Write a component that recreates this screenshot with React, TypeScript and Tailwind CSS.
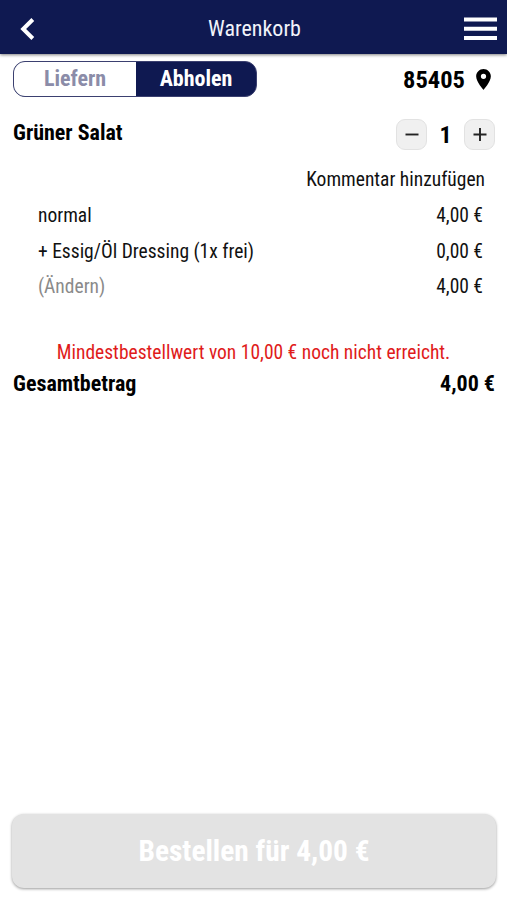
import { useState } from 'react'

const lines = [
  { label: 'normal', price: '4,00 €' },
  { label: '+ Essig/Öl Dressing (1x frei)', price: '0,00 €' },
  { label: '(Ändern)', price: '4,00 €', muted: true },
]

function RoundButton({ plus, onClick }: { plus?: boolean; onClick: () => void }) {
  return (
    <button onClick={onClick} aria-label={plus ? 'Mehr' : 'Weniger'} className="flex h-[31px] w-[31px] items-center justify-center rounded-[9px] border border-[#e2e2e2] bg-[#f0f0f0]">
      <svg width="14" height="14" viewBox="0 0 14 14" stroke="#222" strokeWidth="1.9">
        <path d={plus ? 'M.5 6.500h13M7 0v13' : 'M.5 6.500h13'} />
      </svg>
    </button>
  )
}

export default function App() {
  const [count, setCount] = useState(1)
  return (
    <div className="flex h-[900px] w-[507px] flex-col bg-white font-['Roboto_Condensed','Roboto',sans-serif] text-black font-stretch-75%">
      <header className="flex h-[54px] shrink-0 items-center justify-between bg-[#0f1951] pr-[10px] pl-[20px] shadow-[0_1px_3px_rgba(0,0,0,0.5)]">
        <svg width="25" height="24" viewBox="0 0 25 24" fill="none" stroke="#fff" strokeWidth="4" className="mt-[3px]">
          <path d="M12.800 2.500L3.200 12l9.600 9.500" />
        </svg>
        <h1 className="mt-[3px] text-[22px] leading-[26px] text-[#f1f3fa]">Warenkorb</h1>
        <svg width="33" height="24" viewBox="0 0 33 24" fill="#fff" className="mt-[3px]">
          <path d="M0 .5h33v4H0zM0 9.700h33v4H0zM0 18.900h33v4H0z" />
        </svg>
      </header>

      <div className="mt-[7px] flex h-[36px] items-center justify-between pr-[16px] pl-[13px]">
        <div className="flex h-[36px] w-[244px] overflow-hidden rounded-[12px] border border-[#3b4070] bg-[#0f1951] text-[22px] leading-[34px] font-bold">
          <button className="w-[122px] bg-white text-[#8b8ca8]">Liefern</button>
          <button className="flex-1 text-white">Abholen</button>
        </div>
        <div className="flex items-center gap-[11px] text-[24.500px] leading-[34px] font-bold">
          <span className="mt-[2px]">85405</span>
          <svg width="15" height="21" viewBox="5 2 14 20">
            <path d="M12 2C8.130 2 5 5.130 5 9c0 5.250 7 13 7 13s7-7.750 7-13c0-3.870-3.130-7-7-7zm0 9.500a2.500 2.500 0 0 1 0-5 2.500 2.500 0 0 1 0 5z" />
          </svg>
        </div>
      </div>

      <div className="mt-[22px] flex h-[31px] items-center justify-between pr-[12px] pl-[13px]">
        <h2 className="-mt-[4px] text-[22px] leading-[26px] font-bold">Grüner Salat</h2>
        <div className="flex items-center">
          <RoundButton onClick={() => setCount(Math.max(1, count - 1))} />
          <span className="mt-[2px] w-[37px] text-center text-[24px] leading-[31px] font-bold">{count}</span>
          <RoundButton plus onClick={() => setCount(count + 1)} />
        </div>
      </div>

      <div className="mt-[12px] pr-[22px] text-right text-[19.500px] leading-[36px] text-[#111]">Kommentar hinzufügen</div>
      <ul className="pr-[24px] pl-[38px] text-[19.500px] leading-[35.500px] text-[#111]">
        {lines.map(line => (
          <li key={line.label} className="flex justify-between">
            <span className={line.muted ? 'text-[#8a8a8a]' : ''}>{line.label}</span>
            <span>{line.price}</span>
          </li>
        ))}
      </ul>

      <p className="mt-[33px] text-center text-[19.500px] leading-[30px] text-[#e01b1b]">Mindestbestellwert von 10,00 € noch nicht erreicht.</p>
      <div className="flex justify-between pr-[12px] pl-[13px] text-[22px] leading-[31px] font-bold">
        <span>Gesamtbetrag</span>
        <span>4,00 €</span>
      </div>

      <button className="mr-[11px] ml-[12px] mt-auto mb-[12px] h-[74px] rounded-[12px] bg-[#e3e3e3] text-[29.400px] font-bold text-white shadow-[0_1px_3px_rgba(0,0,0,0.4)]">Bestellen für 4,00 €</button>
    </div>
  )
}
